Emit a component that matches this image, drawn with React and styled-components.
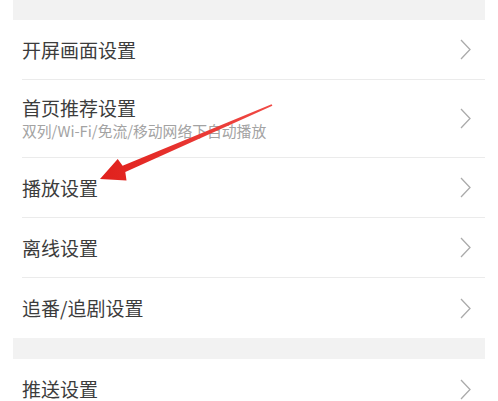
import styled, { createGlobalStyle } from "styled-components";

const GlobalStyle = createGlobalStyle`
  body {
    margin: 0;
    background: #ffffff;
    font-family: "Noto Sans CJK SC", "Noto Sans", sans-serif;
  }
`;

const Page = styled.div`
  position: relative;
  width: 498px;
  height: 401px;
  overflow: hidden;
  padding: 0 13px;
  box-sizing: border-box;
`;

const Gap = styled.div`
  height: ${(p) => p.h}px;
  background: #f2f2f2;
`;

const Group = styled.div`
  display: flex;
  flex-direction: column;
`;

const Row = styled.div`
  display: flex;
  align-items: center;
  justify-content: space-between;
  margin-left: 9px;
  padding-right: 14px;
  height: ${(p) => p.h}px;
  box-sizing: border-box;
  border-bottom: ${(p) => (p.last ? "none" : "1px solid #ebebeb")};
`;

const Texts = styled.div`
  display: flex;
  flex-direction: column;
  gap: 2px;
`;

const Title = styled.div`
  font-size: 19px;
  line-height: 22px;
  color: #3c3c3c;
`;

const Sub = styled.div`
  font-size: 14.8px;
  line-height: 20px;
  color: #a3a3a3;
`;

const Chevron = () => (
  <svg width="11" height="21" viewBox="0 0 11 21">
    <path d="M1 1 L10 10.5 L1 20" fill="none" stroke="#ababab" strokeWidth="1.3" />
  </svg>
);

const Overlay = styled.svg`
  position: absolute;
  left: 0;
  top: 0;
  pointer-events: none;
`;

const groups = [
  [
    { title: "开屏画面设置" },
    { title: "首页推荐设置", sub: "双列/Wi-Fi/免流/移动网络下自动播放", h: 78 },
    { title: "播放设置" },
    { title: "离线设置" },
    { title: "追番/追剧设置" },
  ],
  [{ title: "推送设置" }],
];

export default function App() {
  return (
    <>
      <GlobalStyle />
      <Page>
        {groups.map((items, gi) => (
          <div key={gi}>
            <Gap h={gi === 0 ? 20 : 21} />
            <Group>
              {items.map((it, i) => (
                <Row key={it.title} h={it.h || 60} last={i === items.length - 1}>
                  <Texts>
                    <Title>{it.title}</Title>
                    {it.sub && <Sub>{it.sub}</Sub>}
                  </Texts>
                  <Chevron />
                </Row>
              ))}
            </Group>
          </div>
        ))}
        <Overlay width="498" height="401" viewBox="0 0 498 401">
          <defs>
            <linearGradient id="ar" x1="0" y1="0" x2="1" y2="0">
              <stop offset="0" stopColor="#e0201c" />
              <stop offset="1" stopColor="#f04a45" />
            </linearGradient>
          </defs>
          <polygon
            points="100,179 126.5,180.5 125.3,172.1 272.4,105.8 271.6,104.2 122.6,165.7 117.7,159"
            fill="url(#ar)"
          />
        </Overlay>
      </Page>
    </>
  );
}
